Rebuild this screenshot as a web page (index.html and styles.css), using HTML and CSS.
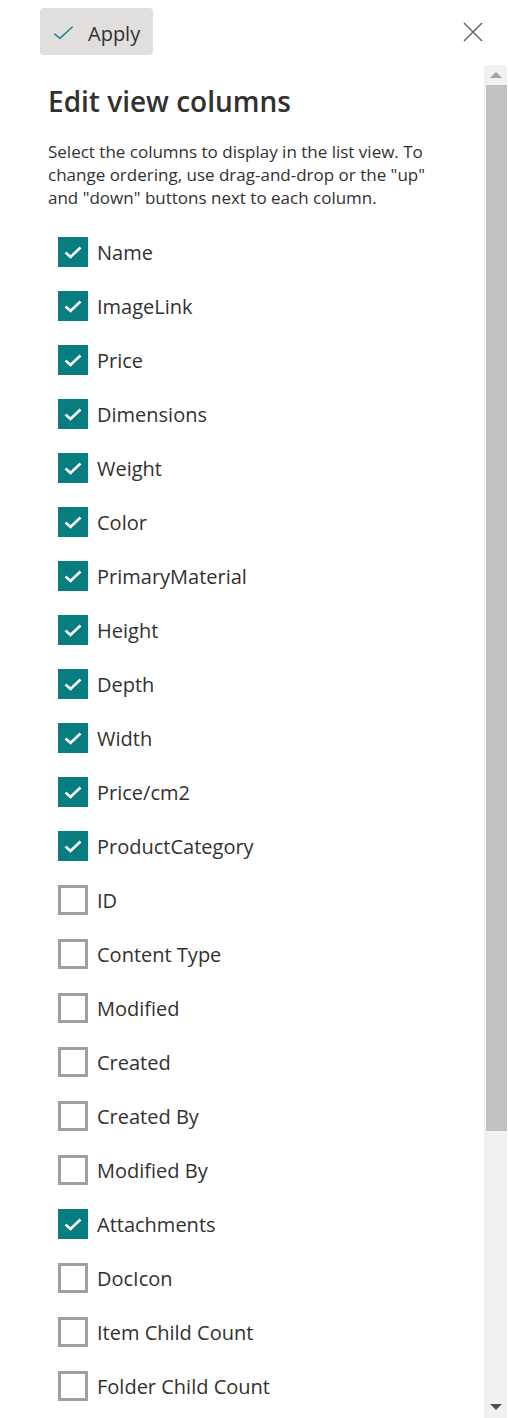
FILE: index.html
```html
<!DOCTYPE html>
<html lang="en">
<head>
<meta charset="utf-8">
<title>Edit view columns</title>
<link rel="stylesheet" href="styles.css">
</head>
<body>
<div class="panel">
  <header class="topbar">
    <button class="apply" type="button">
      <svg class="apply-icon" width="20" height="16" viewBox="0 0 20 16"><path d="M1.3 8.7 L7 13.3 L19.7 1.7" fill="none" stroke="#0b7a86" stroke-width="1.4"/></svg>
      <span>Apply</span>
    </button>
    <button class="close" type="button" aria-label="Close">
      <svg width="20" height="20" viewBox="0 0 20 20"><path d="M1 1 L19 19 M19 1 L1 19" fill="none" stroke="#605e5c" stroke-width="1.4"/></svg>
    </button>
  </header>
  <div class="body">
    <div class="content">
      <h2 class="title">Edit view columns</h2>
      <p class="desc">Select the columns to display in the list view. To change ordering, use drag-and-drop or the "up" and "down" buttons next to each column.</p>
      <ul class="cols">
        <li class="col on"><span class="box"><svg viewBox="0 0 30 30"><path d="M7.5 15.5 L12.5 20 L22.5 10.5" fill="none" stroke="#fff" stroke-width="2.6"/></svg></span><span class="label">Name</span></li>
        <li class="col on"><span class="box"><svg viewBox="0 0 30 30"><path d="M7.5 15.5 L12.5 20 L22.5 10.5" fill="none" stroke="#fff" stroke-width="2.6"/></svg></span><span class="label">ImageLink</span></li>
        <li class="col on"><span class="box"><svg viewBox="0 0 30 30"><path d="M7.5 15.5 L12.5 20 L22.5 10.5" fill="none" stroke="#fff" stroke-width="2.6"/></svg></span><span class="label">Price</span></li>
        <li class="col on"><span class="box"><svg viewBox="0 0 30 30"><path d="M7.5 15.5 L12.5 20 L22.5 10.5" fill="none" stroke="#fff" stroke-width="2.6"/></svg></span><span class="label">Dimensions</span></li>
        <li class="col on"><span class="box"><svg viewBox="0 0 30 30"><path d="M7.5 15.5 L12.5 20 L22.5 10.5" fill="none" stroke="#fff" stroke-width="2.6"/></svg></span><span class="label">Weight</span></li>
        <li class="col on"><span class="box"><svg viewBox="0 0 30 30"><path d="M7.5 15.5 L12.5 20 L22.5 10.5" fill="none" stroke="#fff" stroke-width="2.6"/></svg></span><span class="label">Color</span></li>
        <li class="col on"><span class="box"><svg viewBox="0 0 30 30"><path d="M7.5 15.5 L12.5 20 L22.5 10.5" fill="none" stroke="#fff" stroke-width="2.6"/></svg></span><span class="label">PrimaryMaterial</span></li>
        <li class="col on"><span class="box"><svg viewBox="0 0 30 30"><path d="M7.5 15.5 L12.5 20 L22.5 10.5" fill="none" stroke="#fff" stroke-width="2.6"/></svg></span><span class="label">Height</span></li>
        <li class="col on"><span class="box"><svg viewBox="0 0 30 30"><path d="M7.5 15.5 L12.5 20 L22.5 10.5" fill="none" stroke="#fff" stroke-width="2.6"/></svg></span><span class="label">Depth</span></li>
        <li class="col on"><span class="box"><svg viewBox="0 0 30 30"><path d="M7.5 15.5 L12.5 20 L22.5 10.5" fill="none" stroke="#fff" stroke-width="2.6"/></svg></span><span class="label">Width</span></li>
        <li class="col on"><span class="box"><svg viewBox="0 0 30 30"><path d="M7.5 15.5 L12.5 20 L22.5 10.5" fill="none" stroke="#fff" stroke-width="2.6"/></svg></span><span class="label">Price/cm2</span></li>
        <li class="col on"><span class="box"><svg viewBox="0 0 30 30"><path d="M7.5 15.5 L12.5 20 L22.5 10.5" fill="none" stroke="#fff" stroke-width="2.6"/></svg></span><span class="label">ProductCategory</span></li>
        <li class="col"><span class="box"></span><span class="label">ID</span></li>
        <li class="col"><span class="box"></span><span class="label">Content Type</span></li>
        <li class="col"><span class="box"></span><span class="label">Modified</span></li>
        <li class="col"><span class="box"></span><span class="label">Created</span></li>
        <li class="col"><span class="box"></span><span class="label">Created By</span></li>
        <li class="col"><span class="box"></span><span class="label">Modified By</span></li>
        <li class="col on"><span class="box"><svg viewBox="0 0 30 30"><path d="M7.5 15.5 L12.5 20 L22.5 10.5" fill="none" stroke="#fff" stroke-width="2.6"/></svg></span><span class="label">Attachments</span></li>
        <li class="col"><span class="box"></span><span class="label">DocIcon</span></li>
        <li class="col"><span class="box"></span><span class="label">Item Child Count</span></li>
        <li class="col"><span class="box"></span><span class="label">Folder Child Count</span></li>
      </ul>
    </div>
    <div class="scrollbar">
      <div class="sb-btn"><span class="arrow-up"></span></div>
      <div class="sb-track">
        <div class="sb-thumb"></div>
      </div>
      <div class="sb-btn sb-btn-down"><span class="arrow-down"></span></div>
    </div>
  </div>
</div>
</body>
</html>
```
FILE: styles.css
```css
* { box-sizing: border-box; }

html, body {
  margin: 0;
  padding: 0;
  background: #ffffff;
}

body {
  width: 508px;
  height: 1418px;
  overflow: hidden;
  font-family: "Open Sans", "Noto Sans", sans-serif;
  color: #323130;
}

.panel {
  display: flex;
  flex-direction: column;
  height: 1418px;
}

.topbar {
  height: 65px;
  flex: none;
  display: flex;
  justify-content: space-between;
  align-items: flex-start;
  padding-left: 40px;
  padding-right: 25px;
}

.apply {
  margin-top: 8px;
  width: 113px;
  height: 47px;
  border: none;
  border-radius: 4px;
  background: #e1dfdd;
  display: flex;
  align-items: center;
  padding: 0 0 0 13px;
  font-family: "Open Sans", "Noto Sans", sans-serif;
  font-size: 20px;
  color: #323130;
  gap: 15px;
}

.apply-icon {
  display: block;
  margin-top: 3px;
}

.apply span {
  line-height: 28px;
  margin-top: 4px;
}

.close {
  margin-top: 22px;
  width: 20px;
  height: 20px;
  padding: 0;
  border: none;
  background: transparent;
}

.close svg { display: block; }

.body {
  flex: 1;
  display: flex;
  min-height: 0;
}

.content {
  flex: 1;
  overflow: hidden;
  padding-left: 48px;
}

.title {
  margin: 19px 0 0 0;
  font-size: 28px;
  line-height: 34px;
  font-weight: 600;
  color: #323130;
}

.desc {
  margin: 22px 0 0 0;
  width: 400px;
  font-size: 17px;
  line-height: 23px;
  color: #323130;
}

.cols {
  list-style: none;
  margin: 28px 0 0 10px;
  padding: 0;
  display: flex;
  flex-direction: column;
  gap: 24px;
}

.col {
  display: flex;
  align-items: center;
  height: 30px;
  gap: 9px;
}

.box {
  flex: none;
  width: 30px;
  height: 30px;
  border: 3px solid #a19f9d;
  background: #fff;
}

.col.on .box {
  border: none;
  background: #077d7f;
}

.box svg {
  display: block;
  width: 30px;
  height: 30px;
}

.label {
  font-size: 20px;
  line-height: 30px;
  color: #323130;
  white-space: nowrap;
  margin-top: 1px;
}

.scrollbar {
  flex: none;
  width: 23px;
  margin-right: 1px;
  background: #f1f1f1;
  display: flex;
  flex-direction: column;
}

.sb-btn {
  height: 20px;
  flex: none;
  display: flex;
  align-items: center;
  justify-content: center;
  padding-left: 1px;
}

.sb-btn-down {
  align-items: flex-start;
  padding-top: 6px;
}

.arrow-up {
  width: 0;
  height: 0;
  border-left: 6px solid transparent;
  border-right: 6px solid transparent;
  border-bottom: 6px solid #a3a3a3;
}

.arrow-down {
  width: 0;
  height: 0;
  border-left: 6px solid transparent;
  border-right: 6px solid transparent;
  border-top: 6px solid #505050;
}

.sb-track {
  flex: 1;
  padding-left: 2px;
}

.sb-thumb {
  height: 1046px;
  background: #c1c1c1;
}
```
